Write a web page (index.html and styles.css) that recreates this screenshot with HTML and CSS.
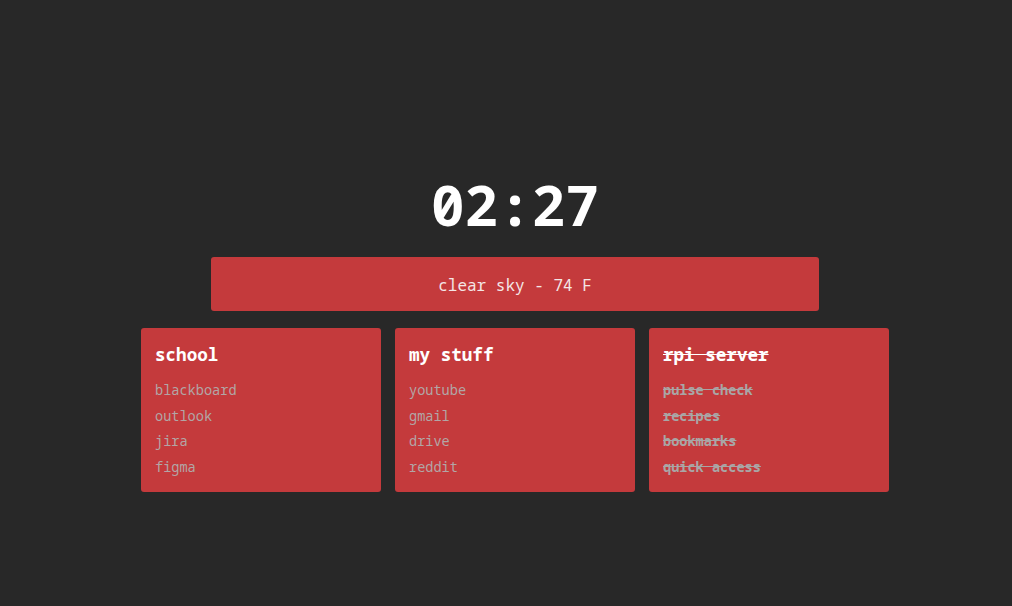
FILE: index.html
```html
<!DOCTYPE html>
<html>
<head>
<meta charset="utf-8">
<link rel="stylesheet" href="styles.css">
</head>
<body>
<main class="page">
  <div class="clock">02:27</div>
  <div class="weather">clear sky - 74 F</div>
  <div class="cards">
    <section class="card">
      <h2 class="card-title">school</h2>
      <ul class="links">
        <li>blackboard</li>
        <li>outlook</li>
        <li>jira</li>
        <li>figma</li>
      </ul>
    </section>
    <section class="card">
      <h2 class="card-title">my stuff</h2>
      <ul class="links">
        <li>youtube</li>
        <li>gmail</li>
        <li>drive</li>
        <li>reddit</li>
      </ul>
    </section>
    <section class="card card-off">
      <h2 class="card-title">rpi server</h2>
      <ul class="links">
        <li>pulse check</li>
        <li>recipes</li>
        <li>bookmarks</li>
        <li>quick access</li>
      </ul>
    </section>
  </div>
</main>
</body>
</html>
```
FILE: styles.css
```css
html, body {
  margin: 0;
  padding: 0;
  background: #282828;
  height: 100%;
}
body {
  font-family: "Noto Sans Mono", "DejaVu Sans Mono", monospace;
  color: #ffffff;
}
.page {
  box-sizing: border-box;
  height: 100%;
  display: flex;
  flex-direction: column;
  align-items: center;
  padding-top: 166px;
  padding-left: 18px;
}
.clock {
  font-size: 56px;
  font-weight: bold;
  line-height: 76px;
  margin-bottom: 15px;
}
.weather {
  width: 608px;
  height: 54px;
  box-sizing: border-box;
  padding-top: 2px;
  background: #c43a3c;
  border-radius: 3px;
  display: flex;
  align-items: center;
  justify-content: center;
  font-size: 16px;
  color: #f4e6e6;
  margin-bottom: 17px;
}
.cards {
  display: flex;
  gap: 14px;
}
.card {
  width: 240px;
  height: 164px;
  box-sizing: border-box;
  background: #c43a3c;
  border-radius: 3px;
  padding: 13px 14px;
}
.card-title {
  margin: 0 0 10px 0;
  font-size: 17.6px;
  font-weight: bold;
  line-height: 26px;
}
.links {
  list-style: none;
  margin: 0;
  padding: 0;
  font-size: 13.6px;
  color: #b2a6a6;
}
.links li {
  line-height: 25.7px;
}
.card-off .card-title,
.card-off .links {
  text-decoration: line-through;
}
.card-off .links {
  font-weight: bold;
  color: #a9a6a6;
}
```
